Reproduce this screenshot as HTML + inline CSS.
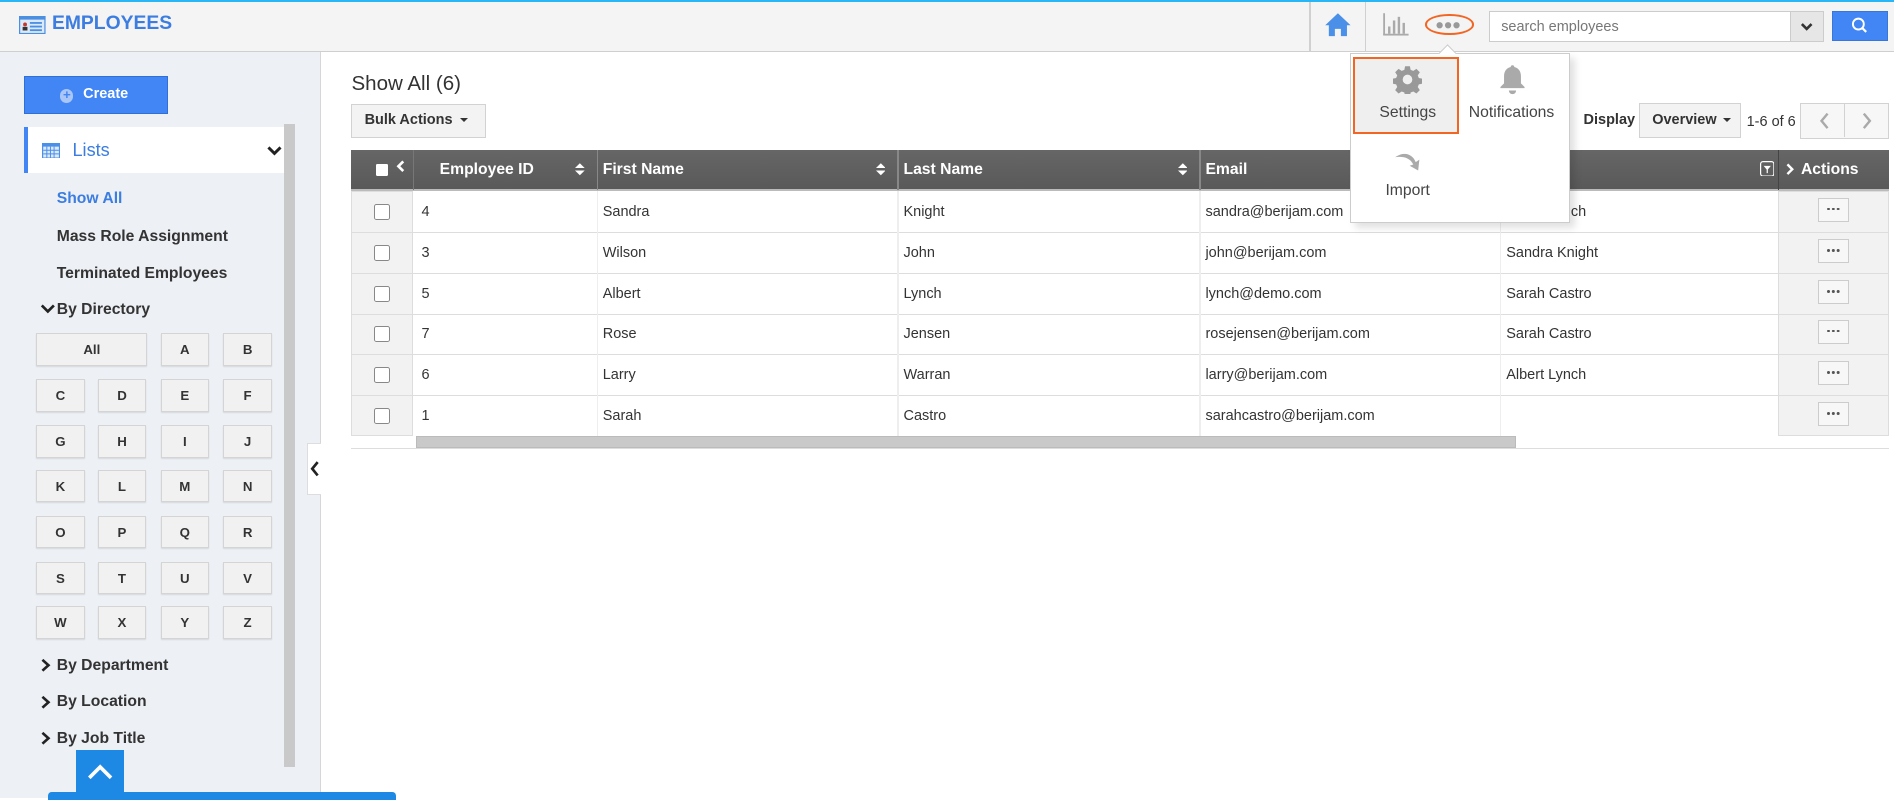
<!DOCTYPE html>
<html><head><meta charset="utf-8"><style>
html,body{margin:0;padding:0;}
body{width:1568px;height:661px;zoom:1.2079;overflow:hidden;position:relative;font-family:"Liberation Sans",Arial,sans-serif;background:#fff;color:#333;}
.a{position:absolute;}
svg{display:block;}
.hdr{left:0;top:0;width:1568px;height:43px;background:#f4f4f4;border-bottom:1px solid #cfcfcf;box-sizing:border-box;border-top:2px solid #29b6f6;}
.side{left:0;top:43px;width:265px;height:618px;background:#edf0f5;border-right:1px solid #d6d6d6;}
.nav{font-size:13px;font-weight:bold;color:#333;}
.lb{position:absolute;width:40px;height:27px;background:#f1f1f1;border:1px solid #d4d4d4;box-sizing:border-box;font-size:11px;font-weight:bold;text-align:center;line-height:26px;color:#333;box-shadow:0 1px 1px rgba(0,0,0,.1);}
.cell{position:absolute;font-size:12px;color:#333;}
.btn{background:#f3f3f3;border:1px solid #d2d2d2;box-sizing:border-box;}
.dots{position:absolute;width:26px;height:20px;background:#f7f7f7;border:1px solid #ccc;box-sizing:border-box;}
.dots::after{content:"";position:absolute;left:7px;top:7px;width:2.4px;height:2.4px;border-radius:50%;background:#555;box-shadow:4px 0 #555,8px 0 #555;}
.cb{position:absolute;left:310px;width:13px;height:13px;border:1px solid #888;border-radius:2px;background:#fff;box-sizing:border-box;}
</style></head><body>
<div class="a hdr"></div>
<svg class="a" style="left:16px;top:13px" width="22" height="15" viewBox="0 0 22 15"><rect x="0.5" y="0.5" width="21" height="14" fill="#dbe9fb" stroke="#4a8fe0"/><rect x="0" y="0" width="22" height="3" fill="#4a8fe0"/><circle cx="5" cy="7" r="1.6" fill="#c0392b"/><rect x="3" y="9" width="4" height="3" fill="#333"/><rect x="9" y="5" width="10" height="1.5" fill="#4a8fe0"/><rect x="9" y="8" width="10" height="1.5" fill="#4a8fe0"/><rect x="9" y="11" width="10" height="1.5" fill="#4a8fe0"/></svg>
<div class="a" style="left:43px;top:11px;font-size:16px;font-weight:bold;color:#3b7de0;">EMPLOYEES</div>
<div class="a" style="left:1084px;top:2px;width:1px;height:41px;background:#d0d0d0"></div>
<div class="a" style="left:1130px;top:2px;width:1px;height:41px;background:#d0d0d0"></div>
<svg class="a" style="left:1096px;top:10px" width="23" height="21" viewBox="0 0 23 21"><path d="M11.5 1 L1 11 L4 11 L4 20 L9 20 L9 14 L14 14 L14 20 L19 20 L19 11 L22 11 Z" fill="#4a8fe8"/></svg>
<svg class="a" style="left:1144px;top:10px" width="23" height="20" viewBox="0 0 23 20"><g fill="#aaa"><rect x="1" y="1" width="1.5" height="18"/><rect x="1" y="18" width="21" height="1.5"/><rect x="5" y="12" width="2" height="6"/><rect x="9" y="7" width="2" height="11"/><rect x="13" y="4" width="2" height="14"/><rect x="17" y="9" width="2" height="9"/></g></svg>
<div class="a" style="left:1180px;top:12px;width:40px;height:17px;border:2px solid #f26522;border-radius:50%;box-sizing:border-box;"></div>
<svg class="a" style="left:1189px;top:17px" width="22" height="7"><circle cx="3" cy="3.5" r="2.6" fill="#999"/><circle cx="10" cy="3.5" r="2.6" fill="#999"/><circle cx="17" cy="3.5" r="2.6" fill="#999"/></svg>
<div class="a" style="left:1233px;top:9px;width:250px;height:26px;background:#fff;border:1px solid #ccc;box-sizing:border-box;font-size:12px;color:#777;padding:6px 9px;">search employees</div>
<div class="a" style="left:1482px;top:9px;width:28px;height:26px;background:#e6e6e6;border:1px solid #ccc;box-sizing:border-box;"><svg width="26" height="24"><path d="M9 10 L13 14 L17 10" stroke="#333" stroke-width="2.2" fill="none"/></svg></div>
<div class="a" style="left:1517px;top:9px;width:46px;height:25px;background:#4285f4;border:1px solid #3a75d8;box-sizing:border-box;"><svg width="44" height="23"><circle cx="21" cy="10" r="4.5" stroke="#fff" stroke-width="1.6" fill="none"/><path d="M24.5 13.5 L27.5 16.5" stroke="#fff" stroke-width="1.8"/></svg></div>

<div class="a side"></div>
<div class="a" style="left:20px;top:63px;width:119px;height:31px;background:#4285f4;border:1px solid #2f6fd6;box-sizing:border-box;color:#fff;font-size:12px;font-weight:bold;line-height:29px;"><span style="display:inline-block;width:11px;height:11px;border-radius:50%;background:#a9c6f7;margin:0 8px 0 29px;vertical-align:-1px;text-align:center;line-height:10px;color:#4285f4;font-size:11px;">+</span>Create</div>
<div class="a" style="left:20px;top:105px;width:215px;height:38px;background:#fff;border-left:4px solid #4285f4;box-sizing:border-box;"></div>
<svg class="a" style="left:35px;top:118px" width="15" height="13"><rect width="15" height="13" fill="#4a8fe8"/><rect x="1" y="3" width="13" height="9" fill="#dbe9fb"/><g stroke="#4a8fe8" stroke-width="0.8"><path d="M4 3V12M7 3V12M10 3V12M1 6H14M1 9H14"/></g></svg>
<div class="a" style="left:60px;top:116px;font-size:15px;color:#3b7de0;">Lists</div>
<svg class="a" style="left:220px;top:120px" width="14" height="10"><path d="M2 2 L7 7 L12 2" stroke="#222" stroke-width="2.4" fill="none"/></svg>
<div class="a" style="left:235px;top:103px;width:9px;height:532px;background:#c9c9c9;"></div>
<div class="a nav" style="left:47px;top:157px;color:#3b7de0;">Show All</div>
<div class="a nav" style="left:47px;top:189px;">Mass Role Assignment</div>
<div class="a nav" style="left:47px;top:219px;">Terminated Employees</div>
<svg class="a" style="left:33px;top:251px" width="13" height="10"><path d="M1.5 2 L6.5 7 L11.5 2" stroke="#222" stroke-width="2.2" fill="none"/></svg>
<div class="a nav" style="left:47px;top:249px;">By Directory</div>
<div class="lb" style="left:30px;top:276px;width:92px;">All</div>
<div class="lb" style="left:133px;top:276px;">A</div><div class="lb" style="left:185px;top:276px;">B</div>
<div class="lb" style="left:30px;top:314px;">C</div><div class="lb" style="left:81px;top:314px;">D</div><div class="lb" style="left:133px;top:314px;">E</div><div class="lb" style="left:185px;top:314px;">F</div>
<div class="lb" style="left:30px;top:352px;">G</div><div class="lb" style="left:81px;top:352px;">H</div><div class="lb" style="left:133px;top:352px;">I</div><div class="lb" style="left:185px;top:352px;">J</div>
<div class="lb" style="left:30px;top:389px;">K</div><div class="lb" style="left:81px;top:389px;">L</div><div class="lb" style="left:133px;top:389px;">M</div><div class="lb" style="left:185px;top:389px;">N</div>
<div class="lb" style="left:30px;top:427px;">O</div><div class="lb" style="left:81px;top:427px;">P</div><div class="lb" style="left:133px;top:427px;">Q</div><div class="lb" style="left:185px;top:427px;">R</div>
<div class="lb" style="left:30px;top:465px;">S</div><div class="lb" style="left:81px;top:465px;">T</div><div class="lb" style="left:133px;top:465px;">U</div><div class="lb" style="left:185px;top:465px;">V</div>
<div class="lb" style="left:30px;top:502px;">W</div><div class="lb" style="left:81px;top:502px;">X</div><div class="lb" style="left:133px;top:502px;">Y</div><div class="lb" style="left:185px;top:502px;">Z</div>
<svg class="a" style="left:33px;top:545px" width="10" height="12"><path d="M2 1.5 L7 6 L2 10.5" stroke="#222" stroke-width="2.2" fill="none"/></svg>
<div class="a nav" style="left:47px;top:544px;">By Department</div>
<svg class="a" style="left:33px;top:575px" width="10" height="12"><path d="M2 1.5 L7 6 L2 10.5" stroke="#222" stroke-width="2.2" fill="none"/></svg>
<div class="a nav" style="left:47px;top:574px;">By Location</div>
<svg class="a" style="left:33px;top:605px" width="10" height="12"><path d="M2 1.5 L7 6 L2 10.5" stroke="#222" stroke-width="2.2" fill="none"/></svg>
<div class="a nav" style="left:47px;top:604px;">By Job Title</div>
<div class="a" style="left:63px;top:621px;width:40px;height:36px;background:#1e88e5;"><svg width="40" height="36"><path d="M11 23 L20 14 L29 23" stroke="#fff" stroke-width="3" fill="none"/></svg></div>
<div class="a" style="left:40px;top:656px;width:288px;height:6px;background:#1e88e5;border-radius:3px 3px 0 0;"></div>
<div class="a" style="left:254px;top:367px;width:12px;height:43px;background:#fff;border:1px solid #ddd;border-right:none;box-sizing:border-box;"><svg width="11" height="41"><path d="M8 15 L3.5 20.5 L8 26" stroke="#222" stroke-width="2.2" fill="none"/></svg></div>

<div class="a" style="left:291px;top:60px;font-size:17px;color:#333;">Show All (6)</div>
<div class="a btn" style="left:291px;top:86px;width:111px;height:28px;font-size:12px;font-weight:bold;line-height:26px;padding-left:10px;">Bulk Actions <span style="display:inline-block;border:4px solid transparent;border-top:4px solid #333;vertical-align:-2px;margin-left:3px"></span></div>
<div class="a" style="left:1311px;top:93px;font-size:12px;font-weight:bold;">Display</div>
<div class="a btn" style="left:1357px;top:85px;width:84px;height:29px;font-size:12px;font-weight:bold;line-height:27px;padding-left:10px;">Overview <span style="display:inline-block;border:4px solid transparent;border-top:4px solid #333;vertical-align:-2px;margin-left:2px"></span></div>
<div class="a" style="left:1446px;top:94px;font-size:12px;">1-6 of 6</div>
<div class="a btn" style="left:1490px;top:85px;width:74px;height:30px;background:#f7f7f7;"><div class="a" style="left:36px;top:0;width:1px;height:28px;background:#d2d2d2"></div><svg class="a" style="left:0;top:0" width="72" height="28"><path d="M22 8 L17 14 L22 20" stroke="#aaa" stroke-width="2" fill="none"/><path d="M52 8 L57 14 L52 20" stroke="#aaa" stroke-width="2" fill="none"/></svg></div>

<div class="a" style="left:291px;top:124px;width:1273px;height:34px;border-bottom:2px solid #bbb;box-sizing:border-box;background:linear-gradient(#666,#595959);"></div>
<div class="a" style="left:311px;top:136px;width:10px;height:10px;background:#fff;border-radius:1px;"></div>
<svg class="a" style="left:328px;top:132px" width="8" height="12"><path d="M6 2 L2 6 L6 10" stroke="#fff" stroke-width="2.2" fill="none"/></svg>
<div class="a" style="left:342px;top:124px;width:1px;height:33px;background:#777"></div>
<div class="a" style="left:494px;top:124px;width:1px;height:33px;background:#888"></div>
<div class="a" style="left:743px;top:124px;width:1px;height:33px;background:#888"></div>
<div class="a" style="left:993px;top:124px;width:1px;height:33px;background:#888"></div>
<div class="a" style="left:1472px;top:124px;width:1px;height:33px;background:#444"></div>
<div class="a" style="left:364px;top:133px;color:#fff;font-weight:bold;font-size:13px;">Employee ID</div>
<div class="a" style="left:499px;top:133px;color:#fff;font-weight:bold;font-size:13px;">First Name</div>
<div class="a" style="left:748px;top:133px;color:#fff;font-weight:bold;font-size:13px;">Last Name</div>
<div class="a" style="left:998px;top:133px;color:#fff;font-weight:bold;font-size:13px;">Email</div>
<svg class="a" style="left:476px;top:134px" width="8" height="12"><path d="M0 5 L4 1 L8 5Z M0 7 L4 11 L8 7Z" fill="#fff"/></svg>
<svg class="a" style="left:725px;top:134px" width="8" height="12"><path d="M0 5 L4 1 L8 5Z M0 7 L4 11 L8 7Z" fill="#fff"/></svg>
<svg class="a" style="left:975px;top:134px" width="8" height="12"><path d="M0 5 L4 1 L8 5Z M0 7 L4 11 L8 7Z" fill="#fff"/></svg>
<svg class="a" style="left:1457px;top:133px" width="12" height="13"><rect x="0.5" y="0.5" width="11" height="12" rx="2" fill="none" stroke="#fff"/><path d="M3 4 H9 L6.5 7 V10 H5.5 V7Z" fill="#fff"/></svg>
<svg class="a" style="left:1478px;top:134px" width="8" height="12"><path d="M2 2 L6 6 L2 10" stroke="#fff" stroke-width="2" fill="none"/></svg>
<div class="a" style="left:1491px;top:133px;color:#fff;font-weight:bold;font-size:13px;">Actions</div>

<div class="a" style="left:291px;top:158px;width:51px;height:203px;background:#f2f2f2;border:1px solid #ddd;box-sizing:border-box;"></div>
<div class="a" style="left:1472px;top:158px;width:92px;height:203px;background:#f2f2f2;border:1px solid #ddd;box-sizing:border-box;"></div>
<div class="a" style="left:291px;top:192px;width:1273px;height:1px;background:#ddd"></div>
<div class="a" style="left:291px;top:226px;width:1273px;height:1px;background:#ddd"></div>
<div class="a" style="left:291px;top:260px;width:1273px;height:1px;background:#ddd"></div>
<div class="a" style="left:291px;top:293px;width:1273px;height:1px;background:#ddd"></div>
<div class="a" style="left:291px;top:327px;width:1273px;height:1px;background:#ddd"></div>
<div class="a" style="left:494px;top:158px;width:1px;height:203px;background:#eee"></div>
<div class="a" style="left:743px;top:158px;width:1px;height:203px;background:#eee"></div>
<div class="a" style="left:993px;top:158px;width:1px;height:203px;background:#eee"></div>
<div class="a" style="left:1242px;top:158px;width:1px;height:203px;background:#eee"></div>
<div class="a" style="left:344px;top:361px;width:911px;height:10px;background:#c9c9c9;border:1px solid #bbb;box-sizing:border-box;"></div>
<div class="a" style="left:291px;top:371px;width:1273px;height:1px;background:#ddd"></div>

<div class="cb" style="top:169px"></div><div class="cb" style="top:203px"></div><div class="cb" style="top:237px"></div><div class="cb" style="top:270px"></div><div class="cb" style="top:304px"></div><div class="cb" style="top:338px"></div>

<div class="cell" style="left:349px;top:169px">4</div><div class="cell" style="left:499px;top:169px">Sandra</div><div class="cell" style="left:748px;top:169px">Knight</div><div class="cell" style="left:998px;top:169px">sandra@berijam.com</div><div class="cell" style="left:1247px;top:169px">Albert Lynch</div>
<div class="cell" style="left:349px;top:203px">3</div><div class="cell" style="left:499px;top:203px">Wilson</div><div class="cell" style="left:748px;top:203px">John</div><div class="cell" style="left:998px;top:203px">john@berijam.com</div><div class="cell" style="left:1247px;top:203px">Sandra Knight</div>
<div class="cell" style="left:349px;top:237px">5</div><div class="cell" style="left:499px;top:237px">Albert</div><div class="cell" style="left:748px;top:237px">Lynch</div><div class="cell" style="left:998px;top:237px">lynch@demo.com</div><div class="cell" style="left:1247px;top:237px">Sarah Castro</div>
<div class="cell" style="left:349px;top:270px">7</div><div class="cell" style="left:499px;top:270px">Rose</div><div class="cell" style="left:748px;top:270px">Jensen</div><div class="cell" style="left:998px;top:270px">rosejensen@berijam.com</div><div class="cell" style="left:1247px;top:270px">Sarah Castro</div>
<div class="cell" style="left:349px;top:304px">6</div><div class="cell" style="left:499px;top:304px">Larry</div><div class="cell" style="left:748px;top:304px">Warran</div><div class="cell" style="left:998px;top:304px">larry@berijam.com</div><div class="cell" style="left:1247px;top:304px">Albert Lynch</div>
<div class="cell" style="left:349px;top:338px">1</div><div class="cell" style="left:499px;top:338px">Sarah</div><div class="cell" style="left:748px;top:338px">Castro</div><div class="cell" style="left:998px;top:338px">sarahcastro@berijam.com</div>

<div class="dots" style="left:1505px;top:164px"></div>
<div class="dots" style="left:1505px;top:198px"></div>
<div class="dots" style="left:1505px;top:232px"></div>
<div class="dots" style="left:1505px;top:265px"></div>
<div class="dots" style="left:1505px;top:299px"></div>
<div class="dots" style="left:1505px;top:333px"></div>

<div class="a" style="left:1118px;top:44px;width:182px;height:141px;background:#fff;border:1px solid #ccc;box-sizing:border-box;box-shadow:4px 4px 6px rgba(0,0,0,.12);"></div>
<div class="a" style="left:1193px;top:39px;width:10px;height:10px;background:#fff;border-left:1px solid #ccc;border-top:1px solid #ccc;transform:rotate(45deg);"></div>
<div class="a" style="left:1120px;top:47px;width:88px;height:64px;background:#efefef;border:2px solid #f26522;box-sizing:border-box;"></div>
<svg class="a" style="left:1153px;top:54px" width="24" height="24" viewBox="0 0 24 24"><path fill="#999" d="M10 1h4l.6 3 2.2.9 2.6-1.7 2.8 2.8-1.7 2.6.9 2.2 3 .6v4l-3 .6-.9 2.2 1.7 2.6-2.8 2.8-2.6-1.7-2.2.9-.6 3h-4l-.6-3-2.2-.9-2.6 1.7-2.8-2.8 1.7-2.6-.9-2.2-3-.6v-4l3-.6.9-2.2-1.700-2.6 2.8-2.8 2.6 1.7 2.2-.9z"/><circle cx="12" cy="12" r="4" fill="#efefef"/></svg>
<div class="a" style="left:1142px;top:86px;font-size:13px;color:#444;">Settings</div>
<svg class="a" style="left:1240px;top:53px" width="24" height="26" viewBox="0 0 24 26"><path d="M12 1c1 0 1.5.7 1.5 1.5 3.5.8 5.5 3.7 5.5 7.5v6l3 3v1H2v-1l3-3v-6c0-3.8 2-6.7 5.5-7.5C10.5 1.7 11 1 12 1z" fill="#aaa"/><path d="M9 22h6a3 3 0 0 1-6 0z" fill="#aaa"/></svg>
<div class="a" style="left:1216px;top:86px;font-size:13px;color:#444;">Notifications</div>
<svg class="a" style="left:1154px;top:124px" width="24" height="18" viewBox="0 0 24 18"><path d="M1 6 C8 1 15 3 18 10 L21 8 L20 17 L13 13 L16 12 C13 6 7 5 1 6Z" fill="#aaa"/></svg>
<div class="a" style="left:1147px;top:151px;font-size:13px;color:#444;">Import</div>
</body></html>
